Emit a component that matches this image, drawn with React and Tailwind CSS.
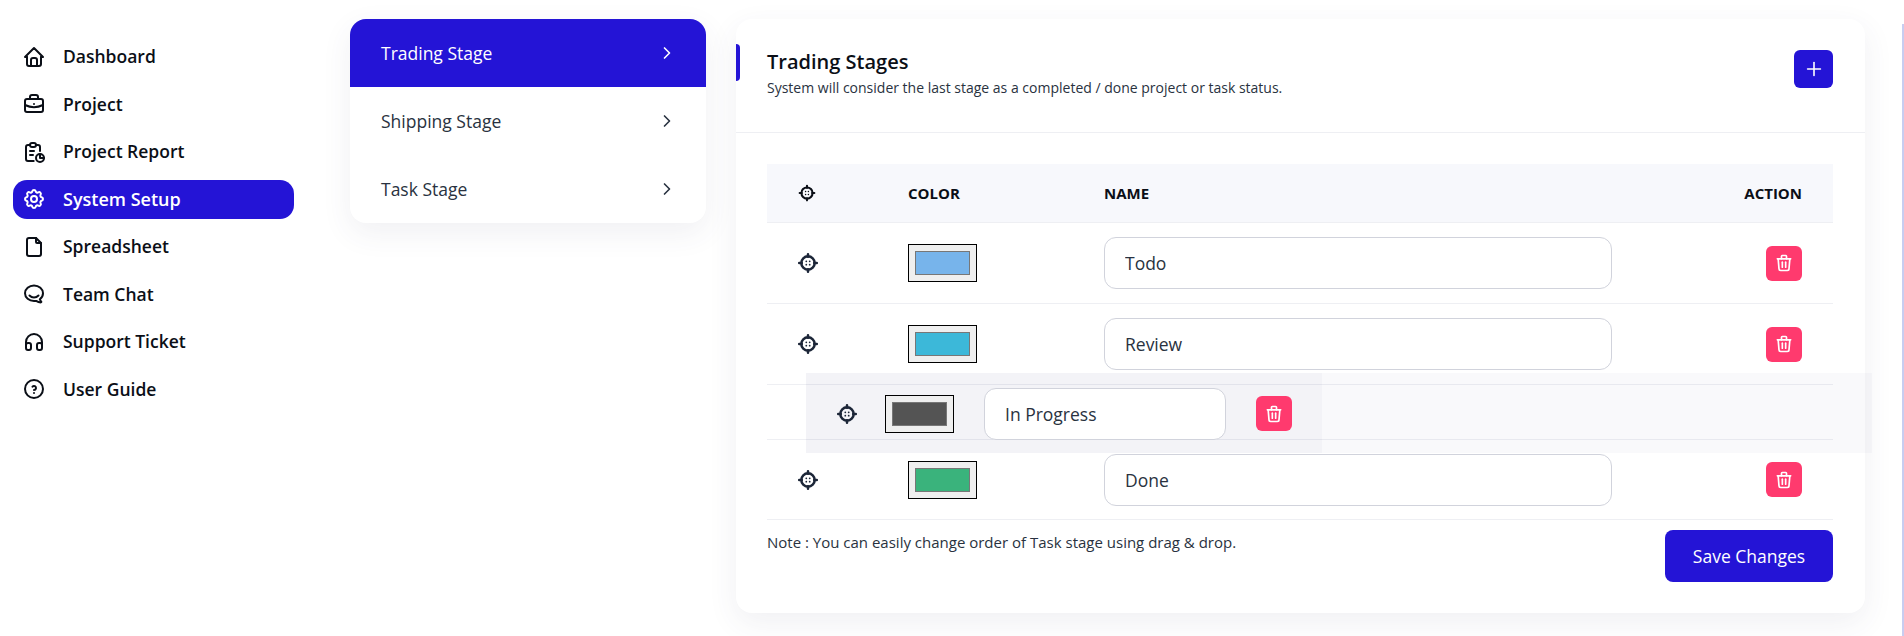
import { TbHome, TbBriefcase, TbReport, TbSettings, TbFile, TbBrandHipchat, TbHeadphones, TbHelpCircle, TbChevronRight, TbPlus, TbTrash } from 'react-icons/tb'

const navItems = [
  { label: 'Dashboard', icon: TbHome },
  { label: 'Project', icon: TbBriefcase },
  { label: 'Project Report', icon: TbReport },
  { label: 'System Setup', icon: TbSettings, active: true },
  { label: 'Spreadsheet', icon: TbFile },
  { label: 'Team Chat', icon: TbBrandHipchat },
  { label: 'Support Ticket', icon: TbHeadphones },
  { label: 'User Guide', icon: TbHelpCircle },
]

const stages = ['Trading Stage', 'Shipping Stage', 'Task Stage']

// drag handle, ring with four ticks and a dotted centre
function DragHandle({ size = 24, className }) {
  return (
    <svg width={size} height={size} viewBox="0 0 24 24" fill="none" stroke="currentColor" strokeWidth="2.5" strokeLinecap="round" className={`shrink-0 ${className}`}>
      <circle cx="12" cy="12" r="6.7" />
      <path d="M12 3.2v2.6M12 18.2v2.6M3.2 12h2.6M18.2 12h2.6" />
      <path d="M10.3 10.3v.01M13.7 10.3v.01M10.3 13.7v.01M13.7 13.7v.01" strokeWidth="1.8" />
    </svg>
  )
}

function Swatch({ color }) {
  return (
    <input
      type="color"
      defaultValue={color}
      className="block w-[69px] h-[38px] box-border border border-black bg-[#efefef] px-[4px] py-[2px]"
    />
  )
}

function DeleteButton({ className = '' }) {
  return (
    <button className={`flex items-center justify-center w-9 h-[35px] shrink-0 rounded-md bg-[#ff3a6e] text-white ${className}`}>
      <TbTrash size={20} />
    </button>
  )
}

function NameInput({ value, className }) {
  return (
    <input
      defaultValue={value}
      className={`block h-[52px] rounded-xl border border-[#d1d3dc] bg-white px-[20px] text-[17.5px] text-[#293240] outline-none ${className}`}
    />
  )
}

function StageRow({ color, name, height }) {
  return (
    <div className={`grid grid-cols-[141px_196px_1fr] items-center border-b border-[#eeeff3] ${height}`}>
      <DragHandle className="ml-[29px] text-[#1c2638]" />
      <Swatch color={color} />
      <div className="flex items-center justify-between pr-[31px]">
        <NameInput value={name} className="w-[508px]" />
        <DeleteButton />
      </div>
    </div>
  )
}

export default function App() {
  return (
    <div className="relative h-[636px] overflow-hidden bg-white font-['Open_Sans',sans-serif]">
      <div className="absolute right-0 top-[24px] bottom-0 w-[2px] bg-[#c8cdf0]" />
      <div className="flex items-start">
        {/* Sidebar */}
        <nav className="w-[350px] shrink-0 pt-[37px] pl-[13px]">
          {navItems.map(item => {
            const Icon = item.icon
            return (
              <a
                key={item.label}
                className={`flex items-center gap-[17.5px] w-[281px] h-[39px] mb-[8.5px] pl-[8.5px] rounded-[14px] font-semibold ${item.active ? 'bg-[#2414d6] text-white font-bold text-[18px]' : 'text-[#0b0f17] text-[17.5px]'}`}
              >
                <Icon size={24} className="shrink-0" />
                {item.label}
              </a>
            )
          })}
        </nav>

        {/* Stage menu */}
        <div className="w-[356px] shrink-0 mt-[19px] overflow-hidden rounded-2xl bg-white shadow-[0_10px_30px_rgba(60,60,100,0.08)]">
          {stages.map((stage, i) => (
            <div
              key={stage}
              className={`flex items-center justify-between h-[68px] pl-[31px] pr-[29.5px] text-[17.5px] ${i === 0 ? 'bg-[#2414d6] text-white' : 'text-[#293240]'}`}
            >
              {stage}
              <TbChevronRight size={20} />
            </div>
          ))}
        </div>

        {/* Main card */}
        <div className="relative w-[1129px] h-[594px] shrink-0 mt-[19px] ml-[30px] rounded-2xl bg-white shadow-[0_10px_30px_rgba(60,60,100,0.08)]">
          <div className="absolute left-0 top-[25px] w-1 h-[37px] rounded-r bg-[#2414d6]" />

          <div className="flex items-start justify-between h-[114px] pl-[31px] pr-[32px] pt-[29px] border-b border-[#eeeff3]">
            <div>
              <h2 className="mb-[3px] text-[20px] leading-[27px] font-semibold text-[#0b0f17]">Trading Stages</h2>
              <p className="text-[14px] leading-[20px] text-[#293240]">System will consider the last stage as a completed / done project or task status.</p>
            </div>
            <button className="flex items-center justify-center w-[39px] h-[38px] mt-[2px] rounded-md bg-[#2414d6] text-white">
              <TbPlus size={22} strokeWidth={1.75} />
            </button>
          </div>

          <div className="pl-[31px] pr-[32px] pt-[31px]">
            <div className="grid grid-cols-[141px_196px_1fr] items-center h-[59px] bg-[#f7f8fc] border-b border-[#eeeff3] text-[15px] font-bold text-[#0b0f17]">
              <DragHandle size={20} className="ml-[30px]" />
              <span>COLOR</span>
              <div className="flex justify-between pr-[31px]">
                <span>NAME</span>
                <span>ACTION</span>
              </div>
            </div>
            <StageRow color="#77b4eb" name="Todo" height="h-[81px]" />
            <StageRow color="#3cb8d9" name="Review" height="h-[81px]" />
            <div className="h-[55px] border-b border-[#eeeff3]" />
            <StageRow color="#3ab37c" name="Done" height="h-[80px]" />
            <div className="flex items-start justify-between pt-[10px]">
              <p className="pt-[2px] text-[15px] leading-[20px] text-[#293240]">Note : You can easily change order of Task stage using drag &amp; drop.</p>
              <button className="w-[168px] h-[52px] rounded-lg bg-[#2414d6] text-[17.5px] font-medium text-white">Save Changes</button>
            </div>
          </div>

          {/* Row being dragged */}
          <div className="absolute left-[70px] top-[354px] w-[1066px] h-[80px] bg-[#6a6a9a]/[0.04]">
            <div className="flex items-start w-[516px] h-[80px] bg-[#6a6a9a]/[0.04]">
              <DragHandle className="ml-[28.5px] mt-[29px] text-[#1c2638]" />
              <div className="ml-[26.5px] mt-[22px]"><Swatch color="#545454" /></div>
              <NameInput value="In Progress" className="ml-[30px] mt-[15px] w-[242px] h-[51px]" />
              <DeleteButton className="ml-[30px] mt-[23px]" />
            </div>
          </div>
        </div>
      </div>
    </div>
  )
}
